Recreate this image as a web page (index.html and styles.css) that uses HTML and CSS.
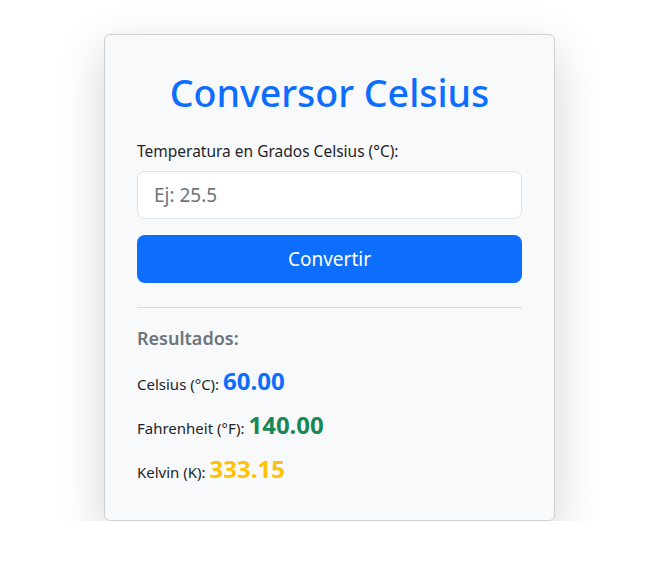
FILE: index.html
```html
<!DOCTYPE html>
<html lang="es">
<head>
<meta charset="utf-8">
<title>Conversor Celsius</title>
<link rel="stylesheet" href="styles.css">
</head>
<body>
<main class="page">
  <section class="card">
    <h1 class="title">Conversor Celsius</h1>
    <label class="label" for="celsius">Temperatura en Grados Celsius (°C):</label>
    <input class="input" id="celsius" type="number" placeholder="Ej: 25.5">
    <button class="btn" type="button">Convertir</button>
    <hr class="divider">
    <h2 class="results-title">Resultados:</h2>
    <p class="row">Celsius (°C): <span class="value value-c">60.00</span></p>
    <p class="row">Fahrenheit (°F): <span class="value value-f">140.00</span></p>
    <p class="row">Kelvin (K): <span class="value value-k">333.15</span></p>
  </section>
</main>
</body>
</html>
```

FILE: styles.css
```css
* { box-sizing: border-box; }
html, body { margin: 0; padding: 0; background: #fff; }
body {
  font-family: "Noto Sans", "Open Sans", sans-serif;
  color: #212529;
  font-size: 16px;
  line-height: 1.5;
}
.page {
  display: flex;
  justify-content: center;
  padding: 34px 0 0 10px;
}
.card {
  width: 451px;
  background: #f8f9fa;
  border: 1px solid #cfd0d1;
  border-radius: 6px;
  box-shadow: 0 16px 48px rgba(0, 0, 0, 0.175);
  padding: 35px 32px 22px;
  display: flex;
  flex-direction: column;
}
.title {
  margin: 0 0 25px;
  text-align: center;
  color: #0d6efd;
  font-size: 37.5px;
  font-weight: 500;
  line-height: 1.2;
}
.label {
  font-size: 15.5px;
  margin-bottom: 8px;
}
.input {
  height: 48px;
  border: 1px solid #dee2e6;
  border-radius: 8px;
  background: #fff;
  padding: 0 16px;
  font-family: inherit;
  font-size: 19px;
  color: #212529;
  margin-bottom: 16px;
}
.input::placeholder { color: #6c757d; }
.btn {
  height: 48px;
  border: none;
  border-radius: 8px;
  background: #0d6efd;
  color: #fff;
  font-family: inherit;
  font-size: 19px;
}
.divider {
  width: 100%;
  border: 0;
  border-top: 1px solid #dadbdc;
  margin: 24px 0 20px;
}
.results-title {
  margin: 0 0 16px;
  color: #6c757d;
  font-size: 18px;
  font-weight: 600;
  line-height: 1.2;
}
.row {
  margin: 0 0 8px;
  font-size: 15px;
  height: 36px;
  line-height: 36px;
}
.value {
  font-size: 24px;
  font-weight: 700;
  line-height: 1;
}
.value-c { color: #0d6efd; }
.value-f { color: #198754; }
.value-k { color: #ffc107; }
```
